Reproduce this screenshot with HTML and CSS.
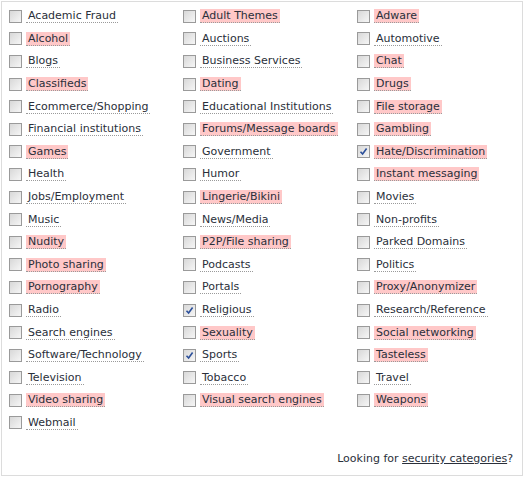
FILE: index.html
```html
<!DOCTYPE html>
<html lang="en">
<head>
    <meta charset="utf-8">
    <title>Categories</title>
    <link rel="stylesheet" href="styles.css">
</head>
<body>
<div class="panel">
    <div class="grid">
        <label class="cat"><span class="box"></span><span class="name">Academic Fraud</span></label>
        <label class="cat"><span class="box"></span><span class="name bad">Adult Themes</span></label>
        <label class="cat"><span class="box"></span><span class="name bad">Adware</span></label>

        <label class="cat"><span class="box"></span><span class="name bad">Alcohol</span></label>
        <label class="cat"><span class="box"></span><span class="name">Auctions</span></label>
        <label class="cat"><span class="box"></span><span class="name">Automotive</span></label>

        <label class="cat"><span class="box"></span><span class="name">Blogs</span></label>
        <label class="cat"><span class="box"></span><span class="name">Business Services</span></label>
        <label class="cat"><span class="box"></span><span class="name bad">Chat</span></label>

        <label class="cat"><span class="box"></span><span class="name bad">Classifieds</span></label>
        <label class="cat"><span class="box"></span><span class="name bad">Dating</span></label>
        <label class="cat"><span class="box"></span><span class="name bad">Drugs</span></label>

        <label class="cat"><span class="box"></span><span class="name">Ecommerce/Shopping</span></label>
        <label class="cat"><span class="box"></span><span class="name">Educational Institutions</span></label>
        <label class="cat"><span class="box"></span><span class="name bad">File storage</span></label>

        <label class="cat"><span class="box"></span><span class="name">Financial institutions</span></label>
        <label class="cat"><span class="box"></span><span class="name bad">Forums/Message boards</span></label>
        <label class="cat"><span class="box"></span><span class="name bad">Gambling</span></label>

        <label class="cat"><span class="box"></span><span class="name bad">Games</span></label>
        <label class="cat"><span class="box"></span><span class="name">Government</span></label>
        <label class="cat"><span class="box checked"><svg viewBox="0 0 9 9"><path d="M1.5 4.8 L3.6 7 L7.6 1.6" /></svg></span><span class="name bad">Hate/Discrimination</span></label>

        <label class="cat"><span class="box"></span><span class="name">Health</span></label>
        <label class="cat"><span class="box"></span><span class="name">Humor</span></label>
        <label class="cat"><span class="box"></span><span class="name bad">Instant messaging</span></label>

        <label class="cat"><span class="box"></span><span class="name">Jobs/Employment</span></label>
        <label class="cat"><span class="box"></span><span class="name bad">Lingerie/Bikini</span></label>
        <label class="cat"><span class="box"></span><span class="name">Movies</span></label>

        <label class="cat"><span class="box"></span><span class="name">Music</span></label>
        <label class="cat"><span class="box"></span><span class="name">News/Media</span></label>
        <label class="cat"><span class="box"></span><span class="name">Non-profits</span></label>

        <label class="cat"><span class="box"></span><span class="name bad">Nudity</span></label>
        <label class="cat"><span class="box"></span><span class="name bad">P2P/File sharing</span></label>
        <label class="cat"><span class="box"></span><span class="name">Parked Domains</span></label>

        <label class="cat"><span class="box"></span><span class="name bad">Photo sharing</span></label>
        <label class="cat"><span class="box"></span><span class="name">Podcasts</span></label>
        <label class="cat"><span class="box"></span><span class="name">Politics</span></label>

        <label class="cat"><span class="box"></span><span class="name bad">Pornography</span></label>
        <label class="cat"><span class="box"></span><span class="name">Portals</span></label>
        <label class="cat"><span class="box"></span><span class="name bad">Proxy/Anonymizer</span></label>

        <label class="cat"><span class="box"></span><span class="name">Radio</span></label>
        <label class="cat"><span class="box checked"><svg viewBox="0 0 9 9"><path d="M1.5 4.8 L3.6 7 L7.6 1.6" /></svg></span><span class="name">Religious</span></label>
        <label class="cat"><span class="box"></span><span class="name">Research/Reference</span></label>

        <label class="cat"><span class="box"></span><span class="name">Search engines</span></label>
        <label class="cat"><span class="box"></span><span class="name bad">Sexuality</span></label>
        <label class="cat"><span class="box"></span><span class="name bad">Social networking</span></label>

        <label class="cat"><span class="box"></span><span class="name">Software/Technology</span></label>
        <label class="cat"><span class="box checked"><svg viewBox="0 0 9 9"><path d="M1.5 4.8 L3.6 7 L7.6 1.6" /></svg></span><span class="name">Sports</span></label>
        <label class="cat"><span class="box"></span><span class="name bad">Tasteless</span></label>

        <label class="cat"><span class="box"></span><span class="name">Television</span></label>
        <label class="cat"><span class="box"></span><span class="name">Tobacco</span></label>
        <label class="cat"><span class="box"></span><span class="name">Travel</span></label>

        <label class="cat"><span class="box"></span><span class="name bad">Video sharing</span></label>
        <label class="cat"><span class="box"></span><span class="name bad">Visual search engines</span></label>
        <label class="cat"><span class="box"></span><span class="name bad">Weapons</span></label>

        <label class="cat"><span class="box"></span><span class="name">Webmail</span></label>
    </div>
    <p class="more">Looking for <a href="#">security categories</a>?</p>
</div>
</body>
</html>
```

FILE: styles.css
```css
body {
    margin: 0;
    padding: 1px;
    font-family: "DejaVu Sans", Verdana, sans-serif;
    font-size: 11px;
    color: #2a2f3a;
    background: #fff;
}

.panel {
    width: 522px;
    height: 475px;
    border: 1px solid #dcdcdc;
    box-sizing: border-box;
    padding: 3px 0 0 7px;
    position: relative;
}

.grid {
    display: grid;
    grid-template-columns: 174px 174px 170px;
    grid-auto-rows: 22.6px;
}

.cat {
    display: flex;
    align-items: center;
    gap: 4px;
    cursor: pointer;
}

.box {
    width: 11px;
    height: 11px;
    border: 1px solid #9a9a9a;
    background: linear-gradient(135deg, #d8d8d8, #f6f6f6);
    display: flex;
    align-items: center;
    justify-content: center;
    flex: none;
}

.box svg {
    width: 9px;
    height: 9px;
    fill: none;
    stroke: #2b4f9a;
    stroke-width: 1.6;
}

.name {
    padding: 0 2px;
    line-height: 13px;
    border-bottom: 1px dotted #9a9a9a;
}

.name.bad {
    background: #ffc8c8;
}

.more {
    position: absolute;
    right: 9px;
    bottom: 10px;
    margin: 0;
}

.more a {
    color: #2a2f3a;
}
```
